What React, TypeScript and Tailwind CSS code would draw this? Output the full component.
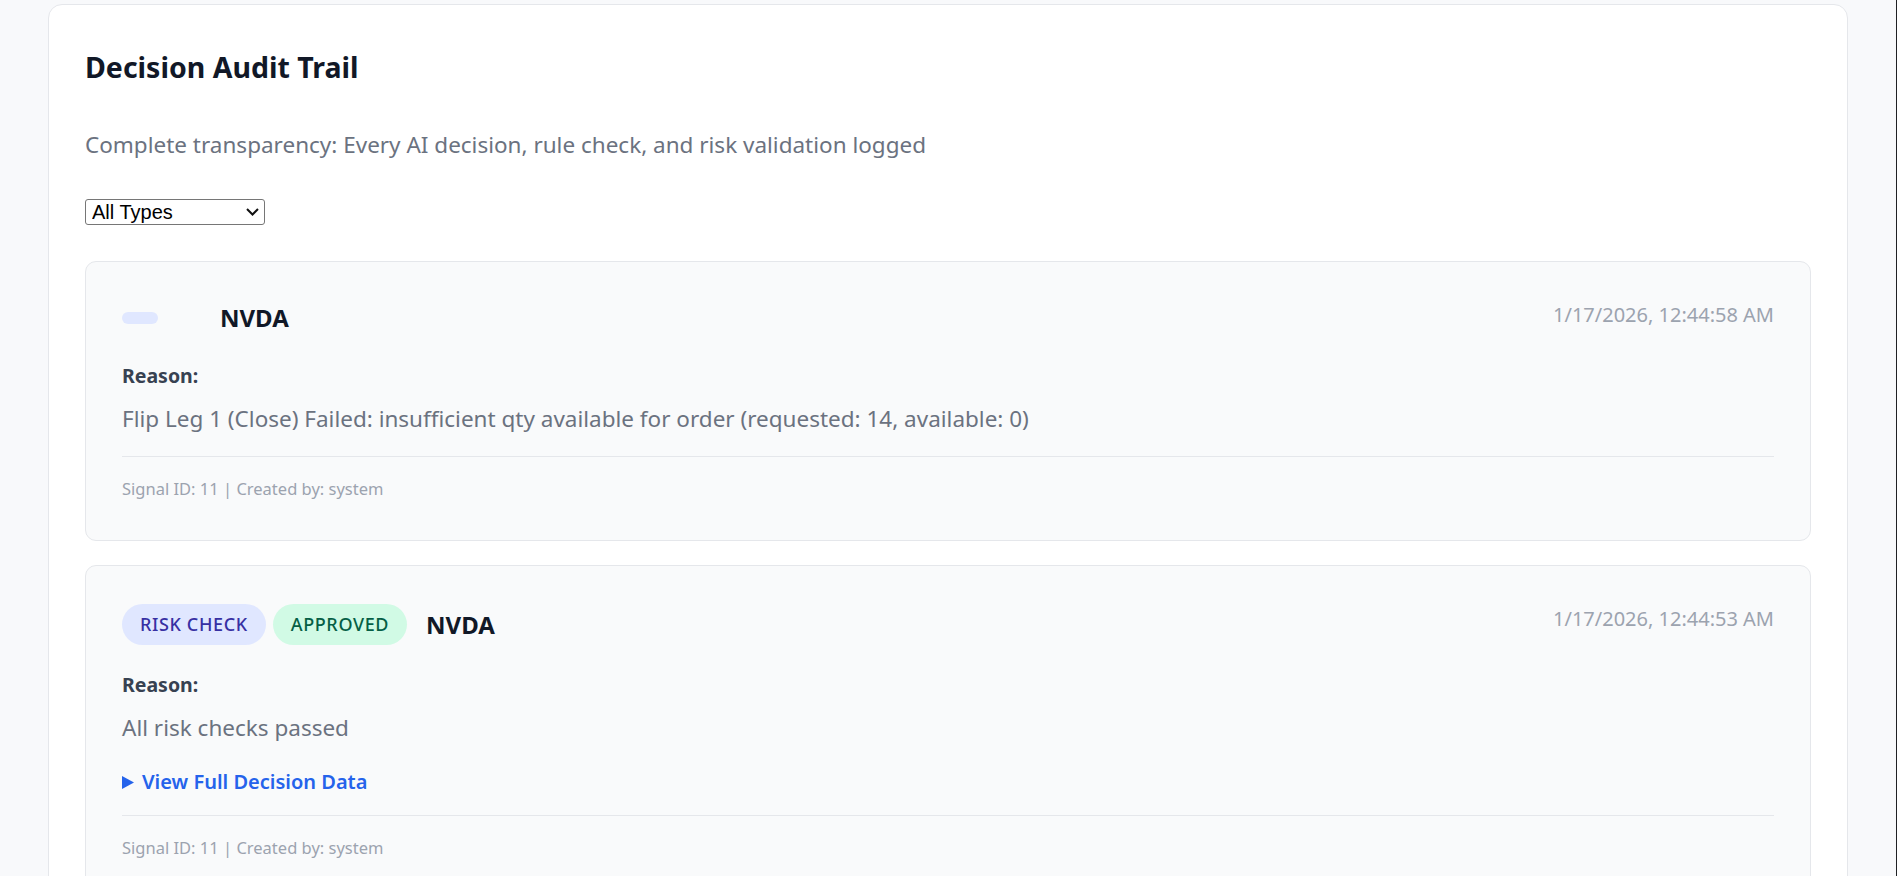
import React from "react";

const entries = [
  {
    id: 1,
    type: "",
    status: "",
    symbol: "NVDA",
    time: "1/17/2026, 12:44:58 AM",
    reason:
      "Flip Leg 1 (Close) Failed: insufficient qty available for order (requested: 14, available: 0)",
    hasData: false,
    signalId: 11,
    createdBy: "system",
  },
  {
    id: 2,
    type: "RISK CHECK",
    status: "APPROVED",
    symbol: "NVDA",
    time: "1/17/2026, 12:44:53 AM",
    reason: "All risk checks passed",
    hasData: true,
    signalId: 11,
    createdBy: "system",
  },
];

export default function App() {
  return (
    <div
      className="min-h-[876px] bg-[#f8f9fb] pt-[4px] border-r border-[#202124]"
      style={{ fontFamily: '"Noto Sans", "Open Sans", sans-serif' }}
    >
      <div className="mx-auto w-[1800px] bg-white border border-[#e5e7eb] rounded-[14px] p-[36px]">
        {/* Header */}
        <h2 className="mt-[8px] text-[28.5px] leading-[36px] font-bold text-[#111827]">
          Decision Audit Trail
        </h2>
        <p className="mt-[45px] text-[22.5px] leading-[30px] text-[#6b7280]">
          Complete transparency: Every AI decision, rule check, and risk validation logged
        </p>

        {/* Type filter */}
        <div className="mt-[39px] relative w-[180px] h-[26px]">
          <select
            className="appearance-none w-[180px] h-[26px] border border-[#767676] rounded-[3px] bg-white text-[20px] leading-[24px] text-black pl-[6px]"
            style={{ fontFamily: '"Liberation Sans", Arial, sans-serif' }}
            defaultValue="all"
          >
            <option value="all">All Types</option>
            <option value="trade">Trade Decision</option>
            <option value="risk">Risk Check</option>
            <option value="rule">Rule Check</option>
          </select>
          <svg
            className="absolute right-[6px] top-[9px] pointer-events-none"
            width="13"
            height="8"
            viewBox="0 0 13 8"
            fill="none"
            stroke="#111"
            strokeWidth="2"
          >
            <path d="M1 1 L6.5 6.5 L12 1" />
          </svg>
        </div>

        {/* Audit entries */}
        <div className="mt-[36px] flex flex-col gap-[24px]">
          {entries.map((item) => (
            <div
              key={item.id}
              className="bg-[#f9fafb] border border-[#e5e7eb] rounded-[11px] px-[36px] pt-[36px] pb-[37px]"
            >
              <div className="flex justify-between items-start">
                <div className="flex items-center min-h-[40px] gap-[7px]">
                  <span className="inline-flex items-center my-[2px] px-[18px] py-[6px] rounded-full bg-[#e0e7ff] text-[#3730a3] text-[18px] leading-[29px] font-medium tracking-[0.035em]">
                    {item.type}
                  </span>
                  <span
                    className={`inline-flex items-center my-[2px] px-[18px] py-[6px] rounded-full text-[18px] leading-[29px] font-medium tracking-[0.035em] text-[#065f46] ${
                      item.status ? "bg-[#d1fae5]" : "bg-transparent"
                    }`}
                  >
                    {item.status}
                  </span>
                  <span className="ml-[12px] text-[24px] font-bold text-[#111827]">
                    {item.symbol}
                  </span>
                </div>
                <span className="mt-[3px] text-[20px] leading-[28px] text-[#9ca3af]">
                  {item.time}
                </span>
              </div>

              <div className="mt-[24px] text-[19.5px] leading-[28px] font-bold text-[#374151]">
                Reason:
              </div>
              <p className="mt-[12px] text-[22.5px] leading-[33px] text-[#6b7280]">
                {item.reason}
              </p>

              {item.hasData && (
                <div className="mt-[26px] flex items-center gap-[8px] text-[20px] leading-[24px] font-semibold text-[#2563eb]">
                  <svg width="12" height="13" viewBox="0 0 12 13" fill="#2563eb">
                    <path d="M0 0 L12 6.5 L0 13 Z" />
                  </svg>
                  View Full Decision Data
                </div>
              )}

              <div className="mt-[21px] pt-[18px] border-t border-[#e5e7eb] text-[16.5px] leading-[28px] text-[#9ca3af]">
                Signal ID: {item.signalId} | Created by: {item.createdBy}
              </div>
            </div>
          ))}
        </div>
      </div>
    </div>
  );
}
